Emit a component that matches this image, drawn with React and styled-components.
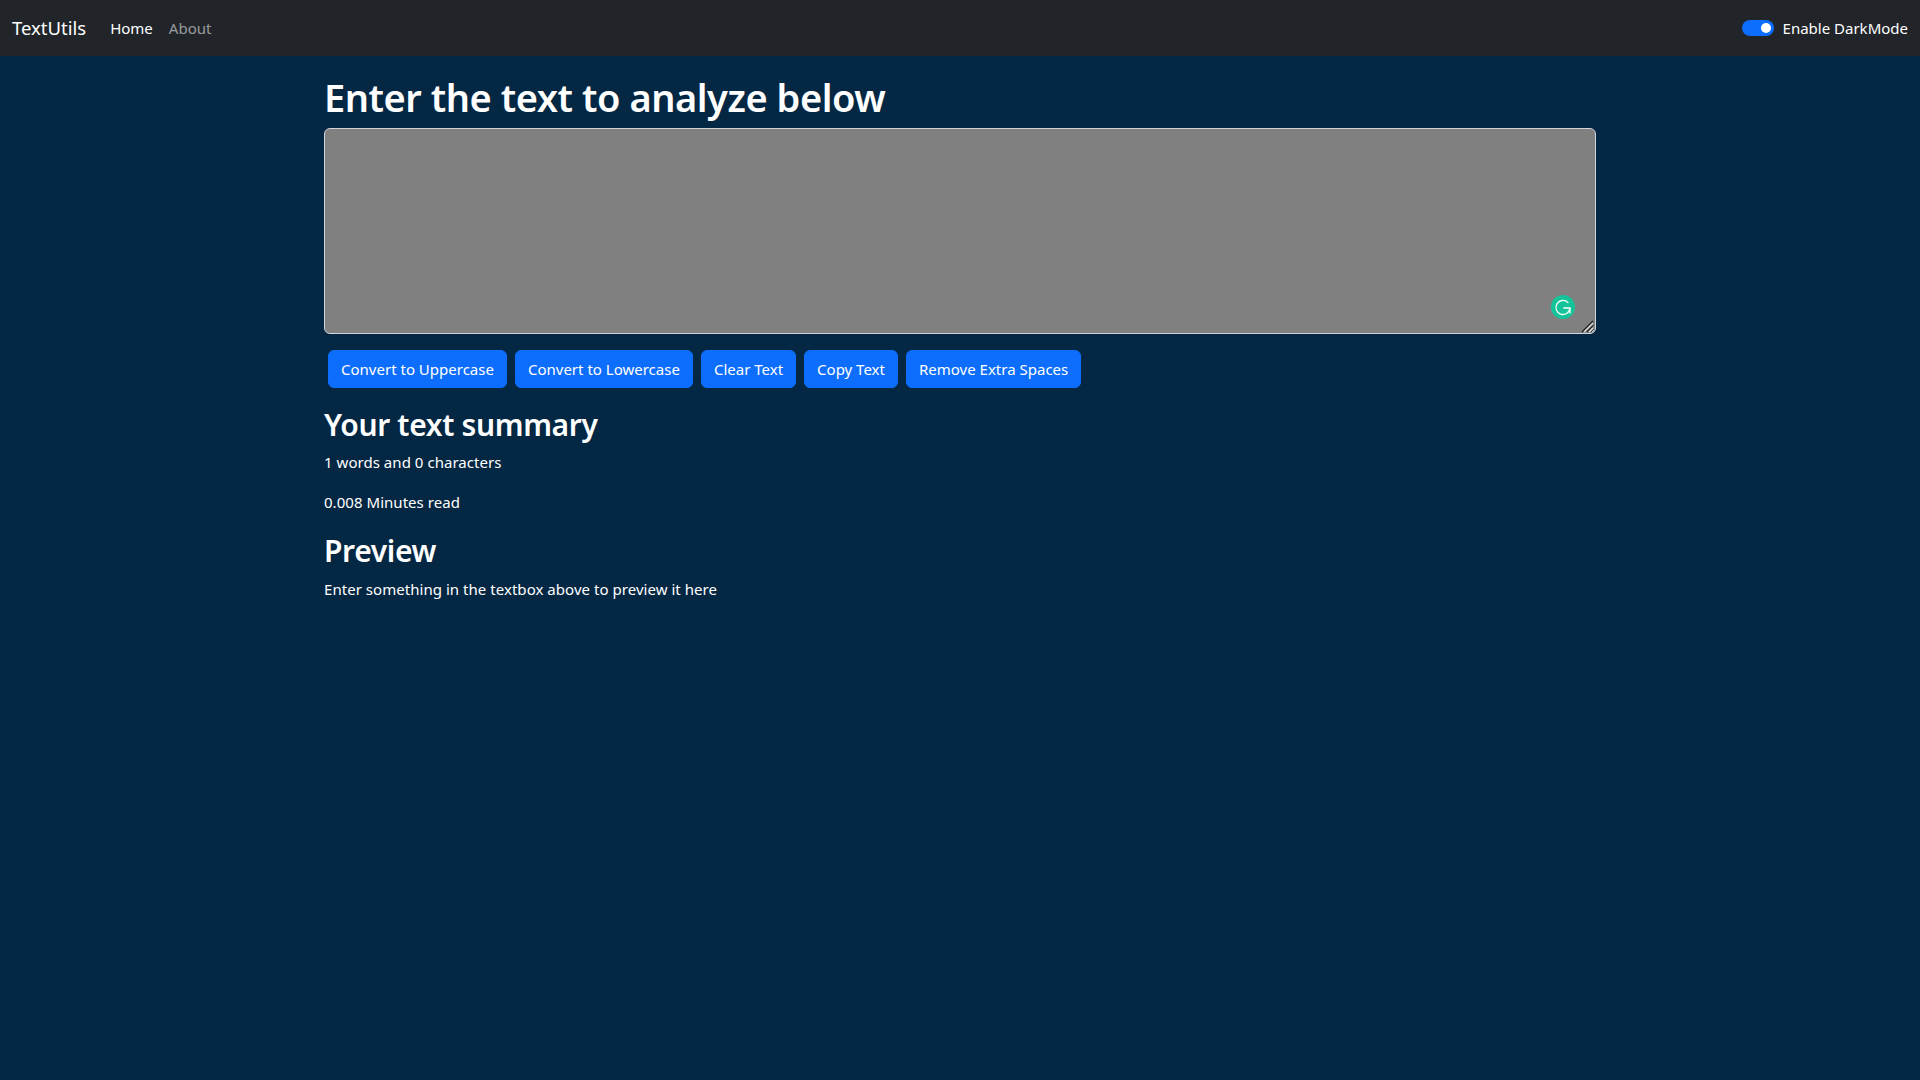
import React, { useState } from "react";
import styled, { createGlobalStyle } from "styled-components";

const GlobalStyle = createGlobalStyle`
  *, *::before, *::after {
    box-sizing: border-box;
  }

  body {
    margin: 0;
    min-height: 100vh;
    background-color: #042743;
    color: #fff;
    font-family: "Noto Sans", "Open Sans", sans-serif;
    font-size: 15px;
    line-height: 24px;
  }
`;

const Navbar = styled.nav`
  display: flex;
  align-items: center;
  justify-content: space-between;
  height: 56px;
  padding: 0 12px;
  background-color: #212529;
`;

const NavLeft = styled.div`
  display: flex;
  align-items: center;
`;

const Brand = styled.a`
  margin-right: 16px;
  color: #fff;
  font-size: 18.5px;
  text-decoration: none;
`;

const NavLink = styled.a`
  padding: 8px;
  color: ${({ $active }) => ($active ? "#fff" : "rgba(255, 255, 255, 0.55)")};
  text-decoration: none;
`;

const SwitchWrap = styled.label`
  display: flex;
  align-items: center;
  gap: 9px;
`;

const SwitchTrack = styled.span`
  display: flex;
  justify-content: ${({ $on }) => ($on ? "flex-end" : "flex-start")};
  align-items: center;
  width: 32px;
  height: 16px;
  padding: 3px;
  border-radius: 8px;
  background-color: ${({ $on }) => ($on ? "#0d6efd" : "#adb5bd")};
`;

const SwitchThumb = styled.span`
  width: 10px;
  height: 10px;
  border-radius: 50%;
  background-color: #fff;
`;

const Container = styled.div`
  width: 1296px;
  margin: 16px auto;
  padding: 0 12px;
`;

const Heading = styled.h1`
  margin: 0 0 6px;
  font-size: 38px;
  font-weight: 600;
  line-height: 50px;
  letter-spacing: -0.45px;
`;

const SubHeading = styled.h2`
  margin: 0 0 4px;
  font-size: 30px;
  font-weight: 600;
  line-height: 42.4px;
  letter-spacing: -0.35px;
`;

const Text = styled.p`
  margin: 0 0 16px;
  letter-spacing: 0.04px;
`;

const EditorWrap = styled.div`
  position: relative;
  margin-bottom: 16px;
`;

const Editor = styled.textarea`
  display: block;
  width: 100%;
  padding: 6px 12px;
  border: 1px solid #ced4da;
  border-radius: 6px;
  outline: none;
  background-color: grey;
  color: #fff;
  font: inherit;
  resize: vertical;
`;

const GrammarlyBadge = styled.svg`
  position: absolute;
  right: 21px;
  bottom: 15px;
  width: 24px;
  height: 24px;
`;

const ResizeGrip = styled.svg`
  position: absolute;
  right: 1px;
  bottom: 1px;
  width: 15px;
  height: 15px;
  pointer-events: none;
`;

const Button = styled.button`
  margin: 0 4px;
  padding: 6px 12px;
  border: 1px solid #0d6efd;
  border-radius: 6px;
  background-color: #0d6efd;
  color: #fff;
  font: inherit;
  letter-spacing: 0.005px;
`;

const actions = [
  "Convert to Uppercase",
  "Convert to Lowercase",
  "Clear Text",
  "Copy Text",
  "Remove Extra Spaces",
];

export default function App() {
  const [dark, setDark] = useState(true);
  const [text, setText] = useState("");

  return (
    <>
      <GlobalStyle />
      <Navbar>
        <NavLeft>
          <Brand href="#">TextUtils</Brand>
          <NavLink href="#" $active>
            Home
          </NavLink>
          <NavLink href="#">About</NavLink>
        </NavLeft>
        <SwitchWrap onClick={() => setDark(!dark)}>
          <SwitchTrack $on={dark}>
            <SwitchThumb />
          </SwitchTrack>
          Enable DarkMode
        </SwitchWrap>
      </Navbar>

      <Container>
        <Heading>Enter the text to analyze below</Heading>
        <EditorWrap>
          <Editor rows={8} value={text} onChange={(e) => setText(e.target.value)} />
          <GrammarlyBadge viewBox="0 0 24 24">
            <circle cx="12" cy="12" r="12" fill="#15c39a" />
            <path
              d="M17 7.6A7 7 0 1 0 18.9 13.4"
              fill="none"
              stroke="#fff"
              strokeWidth="1.3"
              strokeLinecap="round"
            />
            <path
              d="M12.8 13H19V18"
              fill="none"
              stroke="#fff"
              strokeWidth="1.3"
              strokeLinecap="round"
              strokeLinejoin="round"
            />
          </GrammarlyBadge>
          <ResizeGrip viewBox="0 0 15 15">
            <path d="M2 14L13 3M7 14L13 8" stroke="#1c1c1c" strokeWidth="1.4" />
            <path d="M4 14L13 5M9 14L13 10" stroke="#d8d8d8" strokeWidth="1.4" />
          </ResizeGrip>
        </EditorWrap>
        {actions.map((label) => (
          <Button key={label}>{label}</Button>
        ))}
      </Container>

      <Container>
        <SubHeading>Your text summary</SubHeading>
        <Text>1 words and 0 characters</Text>
        <Text>0.008 Minutes read</Text>
        <SubHeading>Preview</SubHeading>
        <Text>Enter something in the textbox above to preview it here</Text>
      </Container>
    </>
  );
}
